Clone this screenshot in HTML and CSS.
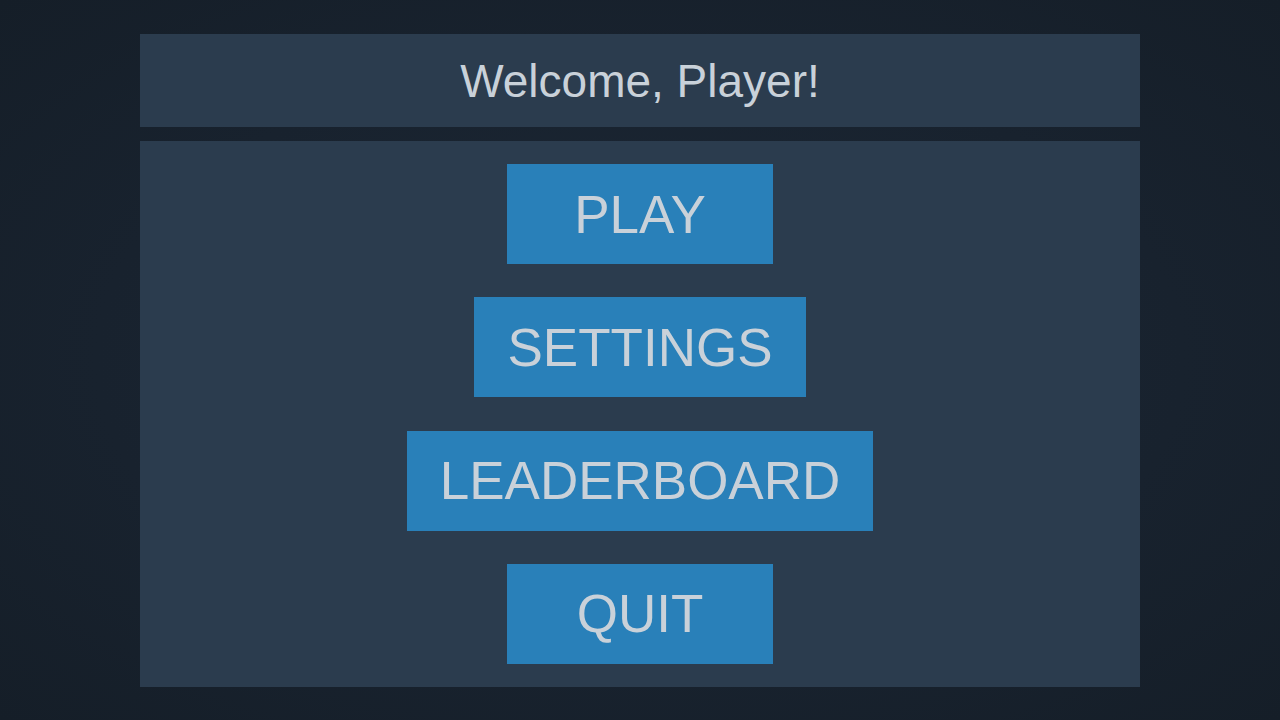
FILE: index.html
```html
<!DOCTYPE html>
<html lang="en">
<head>
<meta charset="utf-8">
<title>Main Menu</title>
<link rel="stylesheet" href="styles.css">
</head>
<body>
<div class="screen">
  <header class="header">Welcome, Player!</header>
  <main class="menu">
    <button class="btn">PLAY</button>
    <button class="btn">SETTINGS</button>
    <button class="btn">LEADERBOARD</button>
    <button class="btn">QUIT</button>
  </main>
</div>
</body>
</html>
```
FILE: styles.css
```css
html, body {
  margin: 0;
  padding: 0;
  height: 100%;
}
body {
  background: radial-gradient(ellipse at center, #1c2836 0%, #18222e 60%, #151e28 100%);
  font-family: "Liberation Sans", Arial, sans-serif;
  color: #c9d1d9;
  overflow: hidden;
}
.screen {
  width: 1000px;
  margin: 0 auto;
  padding-top: 34px;
  display: flex;
  flex-direction: column;
  gap: 14px;
}
.header {
  height: 93px;
  background: #2b3c4e;
  display: flex;
  align-items: center;
  justify-content: center;
  font-size: 46px;
}
.menu {
  height: 546px;
  box-sizing: border-box;
  background: #2b3c4e;
  padding-top: 23px;
  display: flex;
  flex-direction: column;
  align-items: center;
  gap: 33.3px;
}
.btn {
  height: 100px;
  min-width: 266px;
  padding: 0 33px;
  border: none;
  background: #2980b9;
  color: #c9d1d9;
  font-family: "Liberation Sans", Arial, sans-serif;
  font-size: 53px;
  display: flex;
  align-items: center;
  justify-content: center;
  box-sizing: border-box;
}
```
